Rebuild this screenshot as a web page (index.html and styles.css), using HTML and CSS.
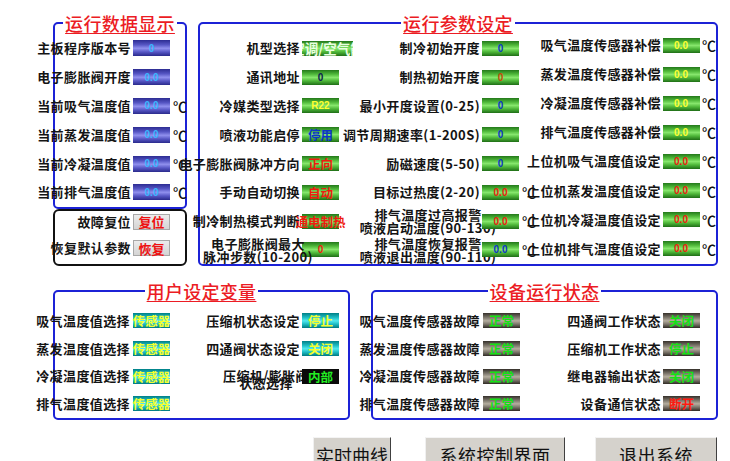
FILE: index.html
```html
<!DOCTYPE html>
<html lang="zh-CN">
<head>
<meta charset="utf-8">
<title>HMI</title>
<link rel="stylesheet" href="styles.css">
</head>
<body>
<div class="screen">
  <div class="top">
    <div class="left-col">
      <fieldset class="panel p1">
        <legend>运行数据显示</legend>
        <div class="col c1">
          <div class="row"><span class="lbl">主板程序版本号</span><span class="fld blue">0</span><span class="unit"></span></div>
          <div class="row"><span class="lbl">电子膨胀阀开度</span><span class="fld blue">0.0</span><span class="unit"></span></div>
          <div class="row"><span class="lbl">当前吸气温度值</span><span class="fld blue">0.0</span><span class="unit">℃</span></div>
          <div class="row"><span class="lbl">当前蒸发温度值</span><span class="fld blue">0.0</span><span class="unit">℃</span></div>
          <div class="row"><span class="lbl">当前冷凝温度值</span><span class="fld blue">0.0</span><span class="unit">℃</span></div>
          <div class="row"><span class="lbl">当前排气温度值</span><span class="fld blue">0.0</span><span class="unit">℃</span></div>
        </div>
      </fieldset>
      <div class="reset">
        <div class="row"><span class="lbl">故障复位</span><span class="btn-s">复位</span></div>
        <div class="row"><span class="lbl">恢复默认参数</span><span class="btn-s">恢复</span></div>
      </div>
    </div>

    <fieldset class="panel p2">
      <legend>运行参数设定</legend>
      <div class="cols">
        <div class="col ca">
          <div class="row"><span class="lbl">机型选择</span><span class="fld green wide clip"><span class="t-white cj big">空调/空气能</span></span></div>
          <div class="row"><span class="lbl">通讯地址</span><span class="fld green t-dark">0</span></div>
          <div class="row"><span class="lbl">冷媒类型选择</span><span class="fld green t-yellow">R22</span></div>
          <div class="row"><span class="lbl">喷液功能启停</span><span class="fld green t-blue cj">停用</span></div>
          <div class="row"><span class="lbl">电子膨胀阀脉冲方向</span><span class="fld green t-red cj">正向</span></div>
          <div class="row"><span class="lbl">手动自动切换</span><span class="fld green t-red cj">自动</span></div>
          <div class="row"><span class="lbl">制冷制热模式判断</span><span class="fld green t-red cj">通电制热</span></div>
          <div class="row"><span class="lbl two two-a"><span>电子膨胀阀最大</span><span>脉冲步数(10-200)</span></span><span class="fld green t-red">0</span></div>
        </div>
        <div class="col cb">
          <div class="row"><span class="lbl">制冷初始开度</span><span class="fld green t-blue">0</span><span class="unit"></span></div>
          <div class="row"><span class="lbl">制热初始开度</span><span class="fld green t-orange">0</span><span class="unit"></span></div>
          <div class="row"><span class="lbl">最小开度设置(0-25)</span><span class="fld green t-blue">0</span><span class="unit"></span></div>
          <div class="row"><span class="lbl">调节周期速率(1-200S)</span><span class="fld green t-blue">0</span><span class="unit"></span></div>
          <div class="row"><span class="lbl">励磁速度(5-50)</span><span class="fld green t-blue">0</span><span class="unit"></span></div>
          <div class="row"><span class="lbl">目标过热度(2-20)</span><span class="fld green t-red">0.0</span><span class="unit">℃</span></div>
          <div class="row"><span class="lbl two two-b"><span>排气温度过高报警</span><span>喷液启动温度(90-130)</span></span><span class="fld green t-red over">0.0</span><span class="unit">℃</span></div>
          <div class="row"><span class="lbl two two-b"><span>排气温度恢复报警</span><span>喷液退出温度(90-110)</span></span><span class="fld green t-blue over">0.0</span><span class="unit">℃</span></div>
        </div>
        <div class="col cc">
          <div class="row"><span class="lbl">吸气温度传感器补偿</span><span class="fld green t-yellow">0.0</span><span class="unit">℃</span></div>
          <div class="row"><span class="lbl">蒸发温度传感器补偿</span><span class="fld green t-yellow">0.0</span><span class="unit">℃</span></div>
          <div class="row"><span class="lbl">冷凝温度传感器补偿</span><span class="fld green t-yellow">0.0</span><span class="unit">℃</span></div>
          <div class="row"><span class="lbl">排气温度传感器补偿</span><span class="fld green t-yellow">0.0</span><span class="unit">℃</span></div>
          <div class="row"><span class="lbl">上位机吸气温度值设定</span><span class="fld green t-red">0.0</span><span class="unit">℃</span></div>
          <div class="row"><span class="lbl">上位机蒸发温度值设定</span><span class="fld green t-red">0.0</span><span class="unit">℃</span></div>
          <div class="row"><span class="lbl">上位机冷凝温度值设定</span><span class="fld green t-red">0.0</span><span class="unit">℃</span></div>
          <div class="row"><span class="lbl">上位机排气温度值设定</span><span class="fld green t-red">0.0</span><span class="unit">℃</span></div>
        </div>
      </div>
    </fieldset>
  </div>

  <div class="mid">
    <fieldset class="panel p3">
      <legend>用户设定变量</legend>
      <div class="cols">
        <div class="col c3a">
          <div class="row"><span class="lbl">吸气温度值选择</span><span class="fld teal cj">传感器</span></div>
          <div class="row"><span class="lbl">蒸发温度值选择</span><span class="fld teal cj">传感器</span></div>
          <div class="row"><span class="lbl">冷凝温度值选择</span><span class="fld teal cj">传感器</span></div>
          <div class="row"><span class="lbl">排气温度值选择</span><span class="fld teal cj">传感器</span></div>
        </div>
        <div class="col c3b">
          <div class="row"><span class="lbl">压缩机状态设定</span><span class="fld teal cj">停止</span></div>
          <div class="row"><span class="lbl">四通阀状态设定</span><span class="fld teal cj">关闭</span></div>
          <div class="row"><span class="lbl two two-c"><span>压缩机/膨胀阀</span><span>状态选择</span></span><span class="fld black cj over">内部</span></div>
        </div>
      </div>
    </fieldset>

    <fieldset class="panel p4">
      <legend>设备运行状态</legend>
      <div class="cols">
        <div class="col c4a">
          <div class="row"><span class="lbl">吸气温度传感器故障</span><span class="fld bronze cj">正常</span></div>
          <div class="row"><span class="lbl">蒸发温度传感器故障</span><span class="fld bronze cj">正常</span></div>
          <div class="row"><span class="lbl">冷凝温度传感器故障</span><span class="fld bronze cj">正常</span></div>
          <div class="row"><span class="lbl">排气温度传感器故障</span><span class="fld bronze cj">正常</span></div>
        </div>
        <div class="col c4b">
          <div class="row"><span class="lbl">四通阀工作状态</span><span class="fld bronze cj">关闭</span></div>
          <div class="row"><span class="lbl">压缩机工作状态</span><span class="fld bronze cj">停止</span></div>
          <div class="row"><span class="lbl">继电器输出状态</span><span class="fld bronze cj">关闭</span></div>
          <div class="row"><span class="lbl">设备通信状态</span><span class="fld bronze cj t-red2">断开</span></div>
        </div>
      </div>
    </fieldset>
  </div>

  <div class="buttons">
    <div class="btn b1">实时曲线</div>
    <div class="btn b2">系统控制界面</div>
    <div class="btn b3">退出系统</div>
  </div>
</div>
</body>
</html>
```

FILE: styles.css
```css
* { box-sizing: border-box; }

html, body {
  margin: 0;
  padding: 0;
  background: #ffffff;
}

body {
  width: 730px;
  height: 461px;
  overflow: hidden;
  font-family: "Noto Sans CJK SC", "Noto Sans", sans-serif;
  color: #111;
}

.screen {
  width: 730px;
  height: 461px;
  overflow: hidden;
}

/* ---------- panels ---------- */
.panel {
  margin: 0;
  padding: 0;
  min-width: 0;
  border: 2px solid #1c22d6;
  border-radius: 5px;
}

.panel legend {
  margin: 0 auto;
  padding: 0 2px;
  font-size: 18px;
  line-height: 22px;
  font-weight: 500;
  letter-spacing: 0.3px;
  color: #ec1c24;
  text-decoration: underline;
  text-decoration-thickness: 1px;
  text-underline-offset: 2px;
}

.top {
  display: flex;
  padding-top: 12px;
}

.left-col {
  margin-left: 53px;
  width: 134px;
}

.p2 {
  margin-left: 11px;
  width: 520px;
  height: 254px;
}

.cols { display: flex; }

.col { display: flex; flex-direction: column; }

.row {
  display: grid;
  align-items: center;
}

.lbl {
  display: flex;
  justify-content: flex-end;
  align-items: center;
  white-space: nowrap;
  font-size: 13px;
  font-weight: 700;
  letter-spacing: 0.4px;
  line-height: 16px;
  color: #141414;
}

.unit {
  white-space: nowrap;
  font-size: 14px;
  font-weight: 500;
  line-height: 16px;
  padding-left: 1px;
}

/* ---------- fields ---------- */
.fld {
  display: flex;
  justify-content: center;
  align-items: center;
  height: 15px;
  white-space: nowrap;
  font-family: "Liberation Sans", Arial, sans-serif;
  font-size: 10px;
  font-weight: bold;
  line-height: 15px;
}

.fld.cj, .cj {
  font-family: "Noto Sans CJK SC", sans-serif;
  font-size: 12.5px;
  font-weight: 700;
}

.cj.big { font-size: 13.5px; }

.clip { overflow: hidden; }
.wide { width: 51px; }
.over { position: relative; z-index: 2; }

.blue {
  height: 16px;
  color: #3ab8ff;
  background: linear-gradient(to bottom, #2c2c92 0%, #5656c4 30%, #9090ee 52%, #5656c4 75%, #2a2a8c 100%);
}

.green {
  background: linear-gradient(to bottom, #23781a 0%, #4fb83a 28%, #86e66c 50%, #4fb83a 72%, #1f6e16 100%);
}

.teal {
  color: #f4ff30;
  background: linear-gradient(to bottom, #007f86 0%, #1ebcc4 30%, #52e8ee 52%, #1ebcc4 74%, #007880 100%);
}

.black {
  color: #22ee22;
  background: #0a0a0a;
}

.bronze {
  color: #16e016;
  background: linear-gradient(to bottom, #35302a 0%, #7d776c 30%, #b5ae9f 52%, #7d776c 74%, #302b25 100%);
}

.t-white { color: #eaffe0; }
.t-dark { color: #0c1a50; }
.t-yellow { color: #ffff30; }
.t-blue { color: #0c36c8; }
.t-red { color: #ee1c10; }
.t-red2 { color: #ff1a10; }
.t-orange { color: #c84808; }

/* ---------- panel 1 ---------- */
.c1 .row {
  grid-template-columns: 76px 37px 14px;
  column-gap: 2px;
  height: 28.8px;
}

/* ---------- reset box ---------- */
.reset {
  display: grid;
  grid-template-rows: 22px 31px;
  width: 134px;
  border: 2px solid #111;
  border-radius: 6px;
}

.reset .row {
  grid-template-columns: 76px 37px;
  column-gap: 2px;
}

.btn-s {
  display: flex;
  justify-content: center;
  align-items: center;
  height: 16px;
  color: #ee1010;
  font-size: 13px;
  font-weight: 700;
  background: linear-gradient(to bottom, #ececec, #d4d4d4);
  border: 1px solid #a8a8a8;
}

/* ---------- panel 2 ---------- */
.ca .row {
  grid-template-columns: 100px 37px;
  column-gap: 2px;
  height: 28.8px;
}
.ca { width: 140px; }

.cb .row {
  grid-template-columns: 140px 37px 0;
  column-gap: 2px;
  height: 28.8px;
}
.cb { width: 181px; }

.cc { margin-top: -3.5px; }
.cc .row {
  grid-template-columns: 140px 37px 14px;
  column-gap: 1.5px;
  height: 29.1px;
}

.two {
  display: block;
  position: relative;
  z-index: 1;
  text-align: center;
  line-height: 13px;
}
.two span { display: block; }
.two-a { width: 116px; }
.two-b { width: 176px; }
.two-c {
  width: 96px;
  margin-left: 48px;
  line-height: 7.5px;
  padding-top: 6px;
}

/* ---------- middle ---------- */
.mid {
  display: flex;
  margin-top: 14px;
}

.p3 {
  margin-left: 53px;
  width: 297px;
}

.p4 {
  margin-left: 21px;
  width: 347px;
}

.p3 .cols, .p4 .cols { padding-top: 5px; }

.c3a .row, .c3b .row, .c4a .row, .c4b .row { height: 27.7px; }

.c3a .row { grid-template-columns: 75px 37px; column-gap: 3px; }
.c3a { width: 115px; }
.c3b .row { grid-template-columns: 130px 37px; column-gap: 2px; }

.c4a .row { grid-template-columns: 107px 37px; column-gap: 3px; }
.c4a { width: 147px; }
.c4b .row { grid-template-columns: 141px 37px; column-gap: 2px; }

/* ---------- buttons ---------- */
.buttons {
  display: flex;
  margin-top: 17px;
  padding-left: 313px;
}

.btn {
  height: 30px;
  padding-top: 5px;
  text-align: center;
  white-space: nowrap;
  font-size: 18px;
  line-height: 24px;
  color: #111;
  background: #d5d2cc;
  border-top: 1px solid #f4f4f4;
  border-left: 1px solid #f0f0f0;
  border-right: 1px solid #404040;
}

.b1 { width: 78px; }
.b2 { width: 140px; margin-left: 34px; letter-spacing: 0.5px; }
.b3 { width: 122px; margin-left: 30px; letter-spacing: 0.5px; }
```
